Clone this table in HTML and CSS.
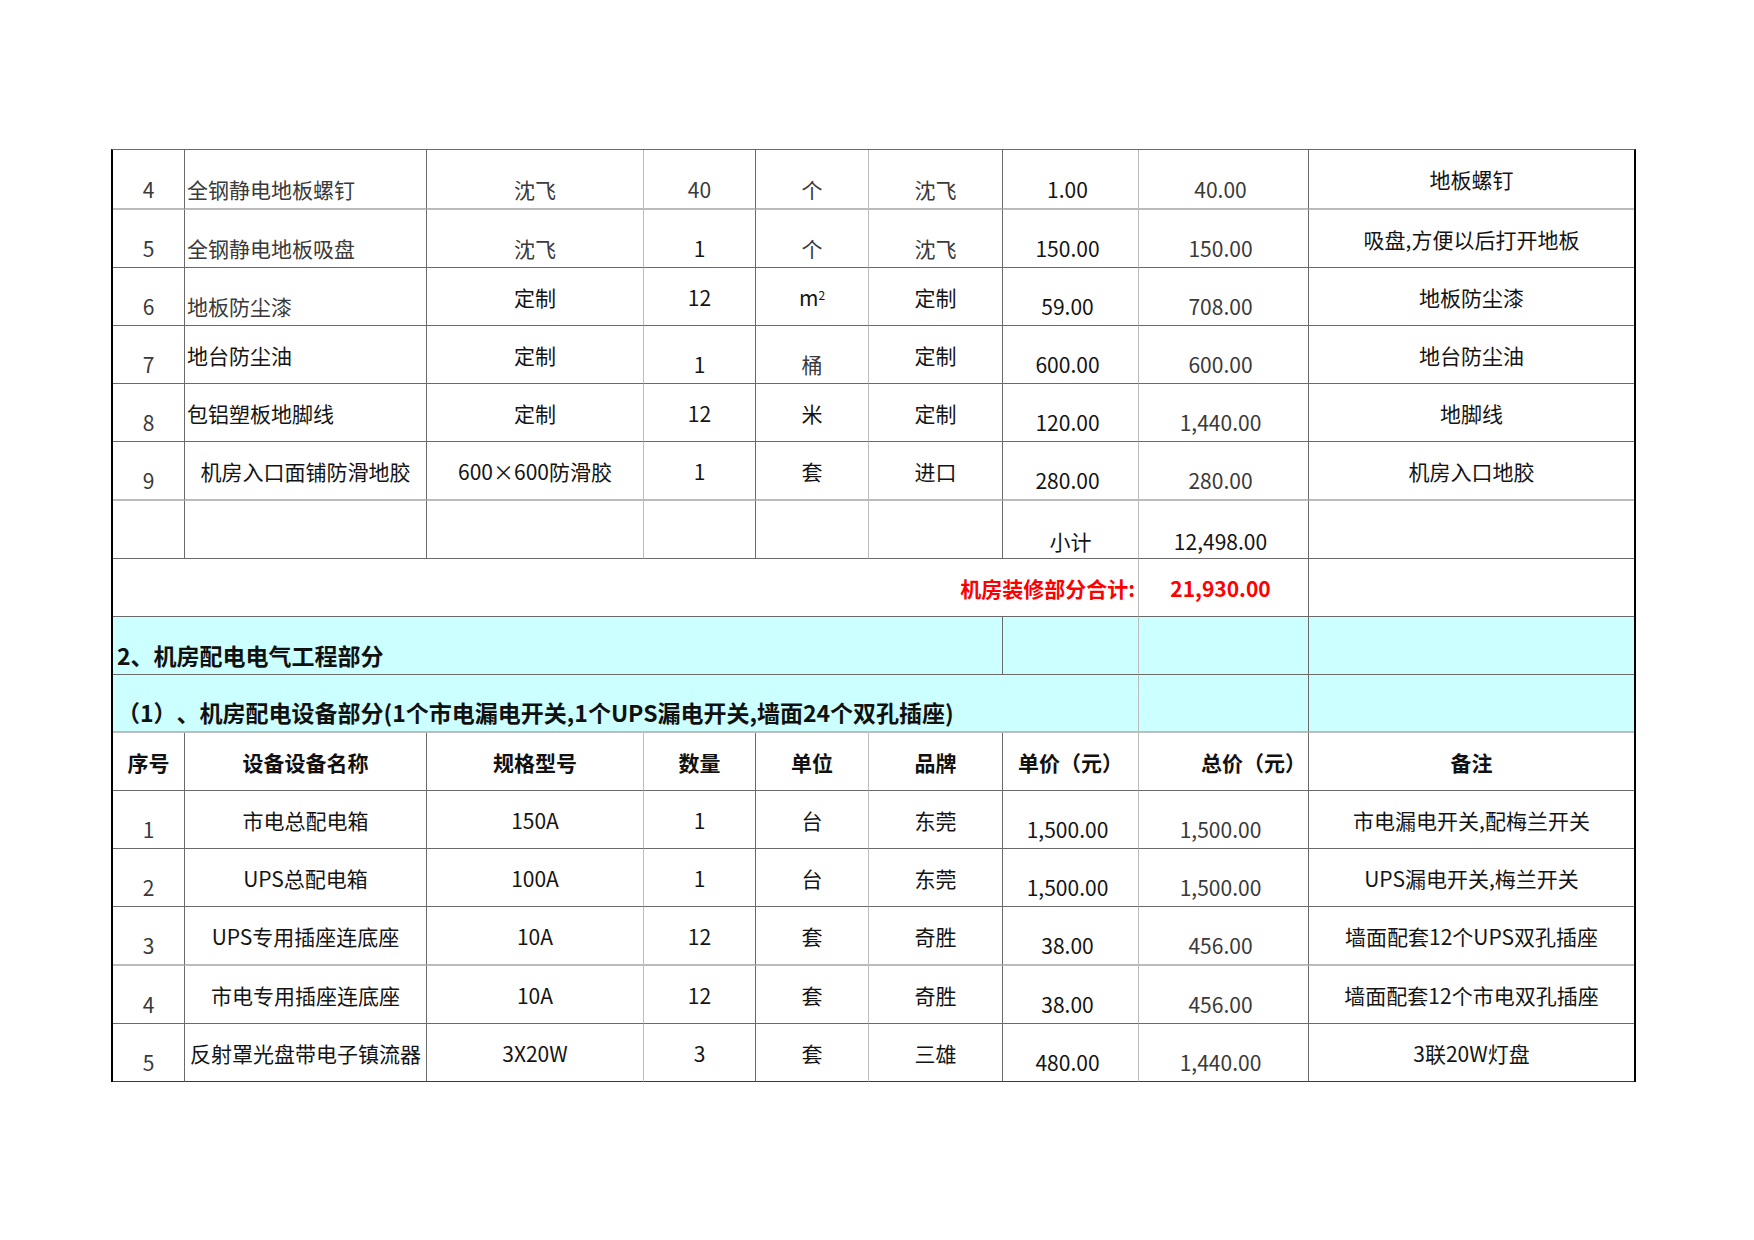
FILE: index.html
```html
<!DOCTYPE html>
<html lang="zh-CN">
<head>
<meta charset="utf-8">
<title>机房工程报价</title>
<link rel="stylesheet" href="styles.css">
</head>
<body>
<div class="page">
  <div class="sheet">
    <div class="row hb">
      <div class="c g">4</div>
      <div class="c l g">全钢静电地板螺钉</div>
      <div class="c g vl">沈飞</div>
      <div class="c g">40</div>
      <div class="c g vl">个</div>
      <div class="c g">沈飞</div>
      <div class="c num vl">1.00</div>
      <div class="c num g">40.00</div>
      <div class="c m end">地板螺钉</div>
    </div>
    <div class="row">
      <div class="c g">5</div>
      <div class="c l g">全钢静电地板吸盘</div>
      <div class="c g vl">沈飞</div>
      <div class="c">1</div>
      <div class="c g vl">个</div>
      <div class="c g">沈飞</div>
      <div class="c num vl">150.00</div>
      <div class="c num g">150.00</div>
      <div class="c m end">吸盘,方便以后打开地板</div>
    </div>
    <div class="row">
      <div class="c g">6</div>
      <div class="c l g">地板防尘漆</div>
      <div class="c m vl">定制</div>
      <div class="c m">12</div>
      <div class="c m vl">m<sup>2</sup></div>
      <div class="c m">定制</div>
      <div class="c num vl">59.00</div>
      <div class="c num g">708.00</div>
      <div class="c m end">地板防尘漆</div>
    </div>
    <div class="row">
      <div class="c g">7</div>
      <div class="c l m">地台防尘油</div>
      <div class="c m vl">定制</div>
      <div class="c">1</div>
      <div class="c g vl">桶</div>
      <div class="c m">定制</div>
      <div class="c num vl">600.00</div>
      <div class="c num g">600.00</div>
      <div class="c m end">地台防尘油</div>
    </div>
    <div class="row">
      <div class="c g">8</div>
      <div class="c l m">包铝塑板地脚线</div>
      <div class="c m vl">定制</div>
      <div class="c m">12</div>
      <div class="c m vl">米</div>
      <div class="c m">定制</div>
      <div class="c num vl">120.00</div>
      <div class="c num g">1,440.00</div>
      <div class="c m end">地脚线</div>
    </div>
    <div class="row hb">
      <div class="c g">9</div>
      <div class="c m">机房入口面铺防滑地胶</div>
      <div class="c m vl">600×600防滑胶</div>
      <div class="c m">1</div>
      <div class="c m vl">套</div>
      <div class="c m">进口</div>
      <div class="c num vl">280.00</div>
      <div class="c num g">280.00</div>
      <div class="c m end">机房入口地胶</div>
    </div>
    <div class="row">
      <div class="c"></div>
      <div class="c"></div>
      <div class="c vl"></div>
      <div class="c"></div>
      <div class="c vl"></div>
      <div class="c"></div>
      <div class="c sub vl">小计</div>
      <div class="c num sub">12,498.00</div>
      <div class="c end"></div>
    </div>
    <div class="row">
      <div class="c m s7 red right vl">机房装修部分合计:</div>
      <div class="c m num red">21,930.00</div>
      <div class="c end"></div>
    </div>
    <div class="row cyan">
      <div class="c s6 sec">2、机房配电电气工程部分</div>
      <div class="c vl"></div>
      <div class="c"></div>
      <div class="c end"></div>
    </div>
    <div class="row cyan hb">
      <div class="c s7 sec vl">（1）、机房配电设备部分(1个市电漏电开关,1个UPS漏电开关,墙面24个双孔插座)</div>
      <div class="c"></div>
      <div class="c end"></div>
    </div>
    <div class="row hd">
      <div class="c">序号</div>
      <div class="c">设备设备名称</div>
      <div class="c vl">规格型号</div>
      <div class="c">数量</div>
      <div class="c vl">单位</div>
      <div class="c">品牌</div>
      <div class="c vl">单价（元）</div>
      <div class="c tr">总价（元）</div>
      <div class="c end">备注</div>
    </div>
    <div class="row">
      <div class="c g">1</div>
      <div class="c m">市电总配电箱</div>
      <div class="c m vl">150A</div>
      <div class="c m">1</div>
      <div class="c m vl">台</div>
      <div class="c m">东莞</div>
      <div class="c num vl">1,500.00</div>
      <div class="c num g">1,500.00</div>
      <div class="c m end">市电漏电开关,配梅兰开关</div>
    </div>
    <div class="row">
      <div class="c g">2</div>
      <div class="c m">UPS总配电箱</div>
      <div class="c m vl">100A</div>
      <div class="c m">1</div>
      <div class="c m vl">台</div>
      <div class="c m">东莞</div>
      <div class="c num vl">1,500.00</div>
      <div class="c num g">1,500.00</div>
      <div class="c m end">UPS漏电开关,梅兰开关</div>
    </div>
    <div class="row hb">
      <div class="c g">3</div>
      <div class="c m">UPS专用插座连底座</div>
      <div class="c m vl">10A</div>
      <div class="c m">12</div>
      <div class="c m vl">套</div>
      <div class="c m">奇胜</div>
      <div class="c num vl">38.00</div>
      <div class="c num g">456.00</div>
      <div class="c m end">墙面配套12个UPS双孔插座</div>
    </div>
    <div class="row">
      <div class="c g">4</div>
      <div class="c m">市电专用插座连底座</div>
      <div class="c m vl">10A</div>
      <div class="c m">12</div>
      <div class="c m vl">套</div>
      <div class="c m">奇胜</div>
      <div class="c num vl">38.00</div>
      <div class="c num g">456.00</div>
      <div class="c m end">墙面配套12个市电双孔插座</div>
    </div>
    <div class="row last">
      <div class="c g">5</div>
      <div class="c m">反射罩光盘带电子镇流器</div>
      <div class="c m vl">3X20W</div>
      <div class="c m">3</div>
      <div class="c m vl">套</div>
      <div class="c m">三雄</div>
      <div class="c num vl">480.00</div>
      <div class="c num g">1,440.00</div>
      <div class="c m end">3联20W灯盘</div>
    </div>
  </div>
</div>
</body>
</html>
```

FILE: styles.css
```css
* {
  box-sizing: border-box;
}

body {
  margin: 0;
  background: #ffffff;
  font-family: "Noto Sans CJK SC", "Noto Sans", sans-serif;
  color: #141414;
  text-spacing-trim: space-all;
}

.page {
  width: 1754px;
  height: 1240px;
  padding: 149px 0 0 111px;
}

.sheet {
  display: grid;
  width: 1525px;
  grid-template-columns: 72px 242px 217px 112px 113px 134px 136px 170px 325px;
  grid-template-rows: 60px 58px 58px 58px 58px 59px 58px 58px 58px 58px 58px 58px 58px 59px 58px 58px;
  border-top: 1px solid #6a6a6a;
  border-left: 2px solid #000000;
  border-right: 2px solid #000000;
}

.row {
  display: contents;
}

.c {
  display: flex;
  align-items: flex-end;
  justify-content: center;
  min-width: 0;
  padding: 0 0 6px 0;
  border-right: 1px solid #6a6a6a;
  border-bottom: 1px solid #6a6a6a;
  font-size: 21px;
  line-height: 26px;
  white-space: nowrap;
  text-spacing-trim: space-all;
}

.hb > .c {
  border-bottom: 2px solid #bcbcbc;
}

.last > .c {
  border-bottom: 1px solid #3a3a3a;
}

.vl {
  border-right-color: #bcbcbc;
}

.end {
  border-right: none;
}

.m {
  align-items: center;
  padding-bottom: 0;
}

.l {
  justify-content: flex-start;
  padding-left: 2px;
}

.num {
  padding-right: 6px;
}

.sub {
  padding-bottom: 4px;
}

.g {
  color: #3a3a3a;
}

.cyan > .c {
  background: #ccffff;
}

.sec {
  font-size: 23px;
  font-weight: 700;
  justify-content: flex-start;
  padding-left: 4px;
  color: #111111;
}

.hd > .c {
  font-weight: 700;
  align-items: center;
  padding-bottom: 0;
  color: #111111;
}

.hd > .tr {
  justify-content: flex-end;
  padding-right: 2px;
}

.red {
  color: #ff0000;
  font-weight: 700;
}

.right {
  justify-content: flex-end;
  padding-right: 3px;
}

.s6 {
  grid-column: span 6;
}

.s7 {
  grid-column: span 7;
}

sup {
  font-size: 12px;
  line-height: 0;
  position: relative;
  top: -2px;
  vertical-align: super;
}
```
